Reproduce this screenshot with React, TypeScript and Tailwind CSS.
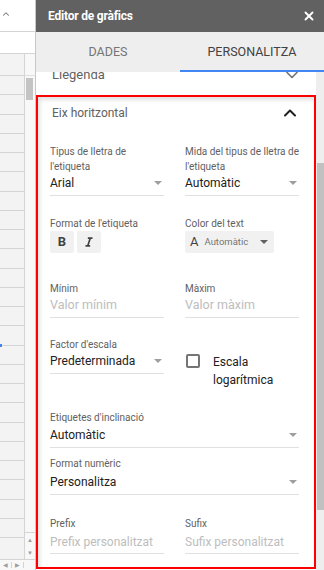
import { ChevronDown, ChevronUp, X } from "lucide-react"

const Arrow = ({ color = "border-t-[#9e9e9e]" }: { color?: string }) => (
  <span className={`block w-0 h-0 border-l-[4px] border-r-[4px] border-t-[4px] border-l-transparent border-r-transparent ${color}`}></span>
)

const Label = ({ children }: { children: React.ReactNode }) => (
  <div className="text-[10px] leading-[15px] text-[#616161] whitespace-nowrap">{children}</div>
)

const SheetStrip = () => {
  const rows = Array.from({ length: 24 })
  return (
    <div className="w-[36px] h-full flex flex-col border-r border-[#c8c8c8] bg-white">
      <div className="h-[32px] border-b border-[#d4d4d4] flex items-start pl-[1px] pt-[9px]">
        <ChevronUp size={10} strokeWidth={2.5} className="text-[#757575]" />
      </div>
      <div className="h-[22px] border-b border-[#d4d4d4]"></div>
      <div className="flex-1 flex">
        <div className="w-[25px] flex flex-col bg-[#f3f3f3] border-r border-[#d4d4d4]">
          <div className="h-[22px] border-b border-[#d4d4d4]"></div>
          <div className="flex-1 flex flex-col">
            {rows.map((_, i) => (
              <div key={i} className="flex-1 border-b border-[#d4d4d4] relative">
                {i === 13 && <span className="absolute left-0 bottom-[-2px] w-[2px] h-[3px] bg-[#4285f4]"></span>}
              </div>
            ))}
          </div>
          <div className="h-[21px]"></div>
        </div>
        <div className="flex-1 flex flex-col bg-[#f8f8f8]">
          <div className="h-[22px] border-b border-[#e0e0e0]"></div>
          <div className="flex-1 relative">
            <div className="absolute top-[2px] left-[1px] w-[7px] h-[22px] bg-[#c4c4c4]"></div>
          </div>
          <div className="h-[27px] border-t border-[#d4d4d4] flex flex-col items-center justify-center gap-[7px] text-[6px] leading-none text-[#9e9e9e]">
            <span>▲</span>
            <span>▼</span>
          </div>
        </div>
      </div>
      <div className="h-[11px] border-t border-[#d4d4d4] flex items-center text-[6px] leading-none text-[#9e9e9e] bg-[#f8f8f8]">
        <span className="w-[12px] text-center border-r border-[#d4d4d4]">◀</span>
        <span className="w-[12px] text-center border-r border-[#d4d4d4]">▶</span>
      </div>
    </div>
  )
}

export default function App() {
  return (
    <div className="w-[324px] h-[570px] flex overflow-hidden bg-white font-['Roboto',sans-serif]">
      <SheetStrip />

      <div className="flex-1 flex flex-col h-full">
        {/* Header */}
        <div className="h-[32px] shrink-0 bg-[#616161] flex items-center justify-between pl-[12px] pr-[8px]">
          <span className="text-white text-[12px] font-bold tracking-[-0.2px]">Editor de gràfics</span>
          <X size={14} strokeWidth={3.2} className="text-white" />
        </div>

        {/* Tabs */}
        <div className="h-[40px] shrink-0 bg-[#eeeeee] flex">
          <div className="w-[144px] flex items-center justify-center text-[12.5px] text-[#757575]">DADES</div>
          <div className="flex-1 flex items-center justify-center text-[12.5px] text-[#424242] border-b-2 border-[#4285f4] pt-[2px]">
            PERSONALITZA
          </div>
        </div>

        {/* Content */}
        <div className="flex-1 flex overflow-hidden">
          <div className="w-[280px] flex flex-col">
            <div className="h-[20px] -mt-[7px] flex items-center justify-between pl-[16px] pr-[14px] shrink-0">
              <span className="text-[13px] text-[#616161]">Llegenda</span>
              <ChevronDown size={20} strokeWidth={2} className="text-[#757575]" />
            </div>

            <div className="mt-[10px] h-[474px] shrink-0 border-2 border-[#ff0000] shadow-[inset_2px_3px_4px_rgba(0,0,0,0.12)] flex flex-col">
              <div className="h-[32px] flex items-center justify-between pl-[14px] pr-[14px]">
                <span className="text-[12px] text-[#616161]">Eix horitzontal</span>
                <ChevronUp size={20} strokeWidth={2.4} className="text-[#212121]" />
              </div>

              <div className="pl-[12px] pr-[15px] flex flex-col">
                {/* Font + size */}
                <div className="mt-[15px] grid grid-cols-2 gap-x-[21px]">
                  <div>
                    <Label>Tipus de lletra de<br />l'etiqueta</Label>
                    <div className="h-[22px] pb-[3px] border-b border-[#e0e0e0] flex items-center justify-between pr-[2px]">
                      <span className="text-[12px] text-[#212121]">Arial</span>
                      <Arrow />
                    </div>
                  </div>
                  <div>
                    <Label>Mida del tipus de lletra de<br />l'etiqueta</Label>
                    <div className="h-[22px] pb-[3px] border-b border-[#e0e0e0] flex items-center justify-between pr-[2px]">
                      <span className="text-[12px] text-[#212121]">Automàtic</span>
                      <Arrow />
                    </div>
                  </div>
                </div>

                {/* Format + colour */}
                <div className="mt-[20px] grid grid-cols-2 gap-x-[21px]">
                  <div>
                    <Label>Format de l'etiqueta</Label>
                    <div className="flex gap-[3px]">
                      <div className="w-[24px] h-[22px] bg-[#f1f1f1] rounded-[2px] flex items-center justify-center text-[13px] font-bold text-[#424242]">B</div>
                      <div className="w-[24px] h-[22px] bg-[#f1f1f1] rounded-[2px] flex items-center justify-center">
                        <svg width="14" height="14" viewBox="0 0 24 24" fill="#424242">
                          <path d="M10 4v3h2.21l-3.42 10H6v3h8v-3h-2.21l3.42-10H18V4z" />
                        </svg>
                      </div>
                    </div>
                  </div>
                  <div>
                    <Label>Color del text</Label>
                    <div className="w-[89px] h-[22px] bg-[#f1f1f1] rounded-[2px] flex items-center pl-[5px] pr-[6px]">
                      <span className="text-[13px] text-[#424242]">A</span>
                      <span className="ml-[6px] text-[9.5px] text-[#757575]">Automàtic</span>
                      <span className="ml-auto">
                        <Arrow color="border-t-[#616161]" />
                      </span>
                    </div>
                  </div>
                </div>

                {/* Min / Max */}
                <div className="mt-[28px] grid grid-cols-2 gap-x-[21px]">
                  <div>
                    <Label>Mínim</Label>
                    <div className="h-[22px] pb-[3px] border-b border-[#e0e0e0] flex items-center">
                      <span className="text-[12.5px] text-[#bdbdbd]">Valor mínim</span>
                    </div>
                  </div>
                  <div>
                    <Label>Màxim</Label>
                    <div className="h-[22px] pb-[3px] border-b border-[#e0e0e0] flex items-center">
                      <span className="text-[12.5px] text-[#bdbdbd]">Valor màxim</span>
                    </div>
                  </div>
                </div>

                {/* Scale factor / log */}
                <div className="mt-[19px] grid grid-cols-2 gap-x-[21px]">
                  <div>
                    <Label>Factor d'escala</Label>
                    <div className="h-[22px] pb-[3px] border-b border-[#e0e0e0] flex items-center justify-between pr-[2px]">
                      <span className="text-[12px] text-[#212121]">Predeterminada</span>
                      <Arrow />
                    </div>
                  </div>
                  <div className="pt-[16px] pl-[1px] flex items-start">
                    <span className="mt-[1px] w-[14px] h-[14px] border-2 border-[#757575] rounded-[2px] shrink-0"></span>
                    <span className="ml-[13px] text-[12px] leading-[18px] text-[#212121]">
                      Escala
                      <br />
                      logarítmica
                    </span>
                  </div>
                </div>

                {/* Slant labels */}
                <div className="mt-[21px]">
                  <Label>Etiquetes d'inclinació</Label>
                  <div className="h-[23px] pb-[3px] border-b border-[#e0e0e0] flex items-center justify-between pr-[2px]">
                    <span className="text-[12px] text-[#212121]">Automàtic</span>
                    <Arrow />
                  </div>
                </div>

                {/* Number format */}
                <div className="mt-[8px]">
                  <Label>Format numèric</Label>
                  <div className="h-[24px] pb-[2px] border-b border-[#e0e0e0] flex items-center justify-between pr-[2px]">
                    <span className="text-[12px] text-[#212121]">Personalitza</span>
                    <Arrow />
                  </div>
                </div>

                {/* Prefix / suffix */}
                <div className="mt-[21px] grid grid-cols-2 gap-x-[21px]">
                  <div>
                    <Label>Prefix</Label>
                    <div className="h-[23px] pb-[1px] border-b border-[#e0e0e0] flex items-center">
                      <span className="text-[12px] text-[#bdbdbd]">Prefix personalitzat</span>
                    </div>
                  </div>
                  <div>
                    <Label>Sufix</Label>
                    <div className="h-[23px] pb-[1px] border-b border-[#e0e0e0] flex items-center">
                      <span className="text-[12px] text-[#bdbdbd]">Sufix personalitzat</span>
                    </div>
                  </div>
                </div>
              </div>
            </div>
          </div>

          {/* Panel scrollbar */}
          <div className="flex-1 bg-[#eeeeee] relative">
            <div className="absolute top-[91px] left-[1px] right-0 h-[347px] bg-[#c1c1c1]"></div>
          </div>
        </div>
      </div>
    </div>
  )
}
